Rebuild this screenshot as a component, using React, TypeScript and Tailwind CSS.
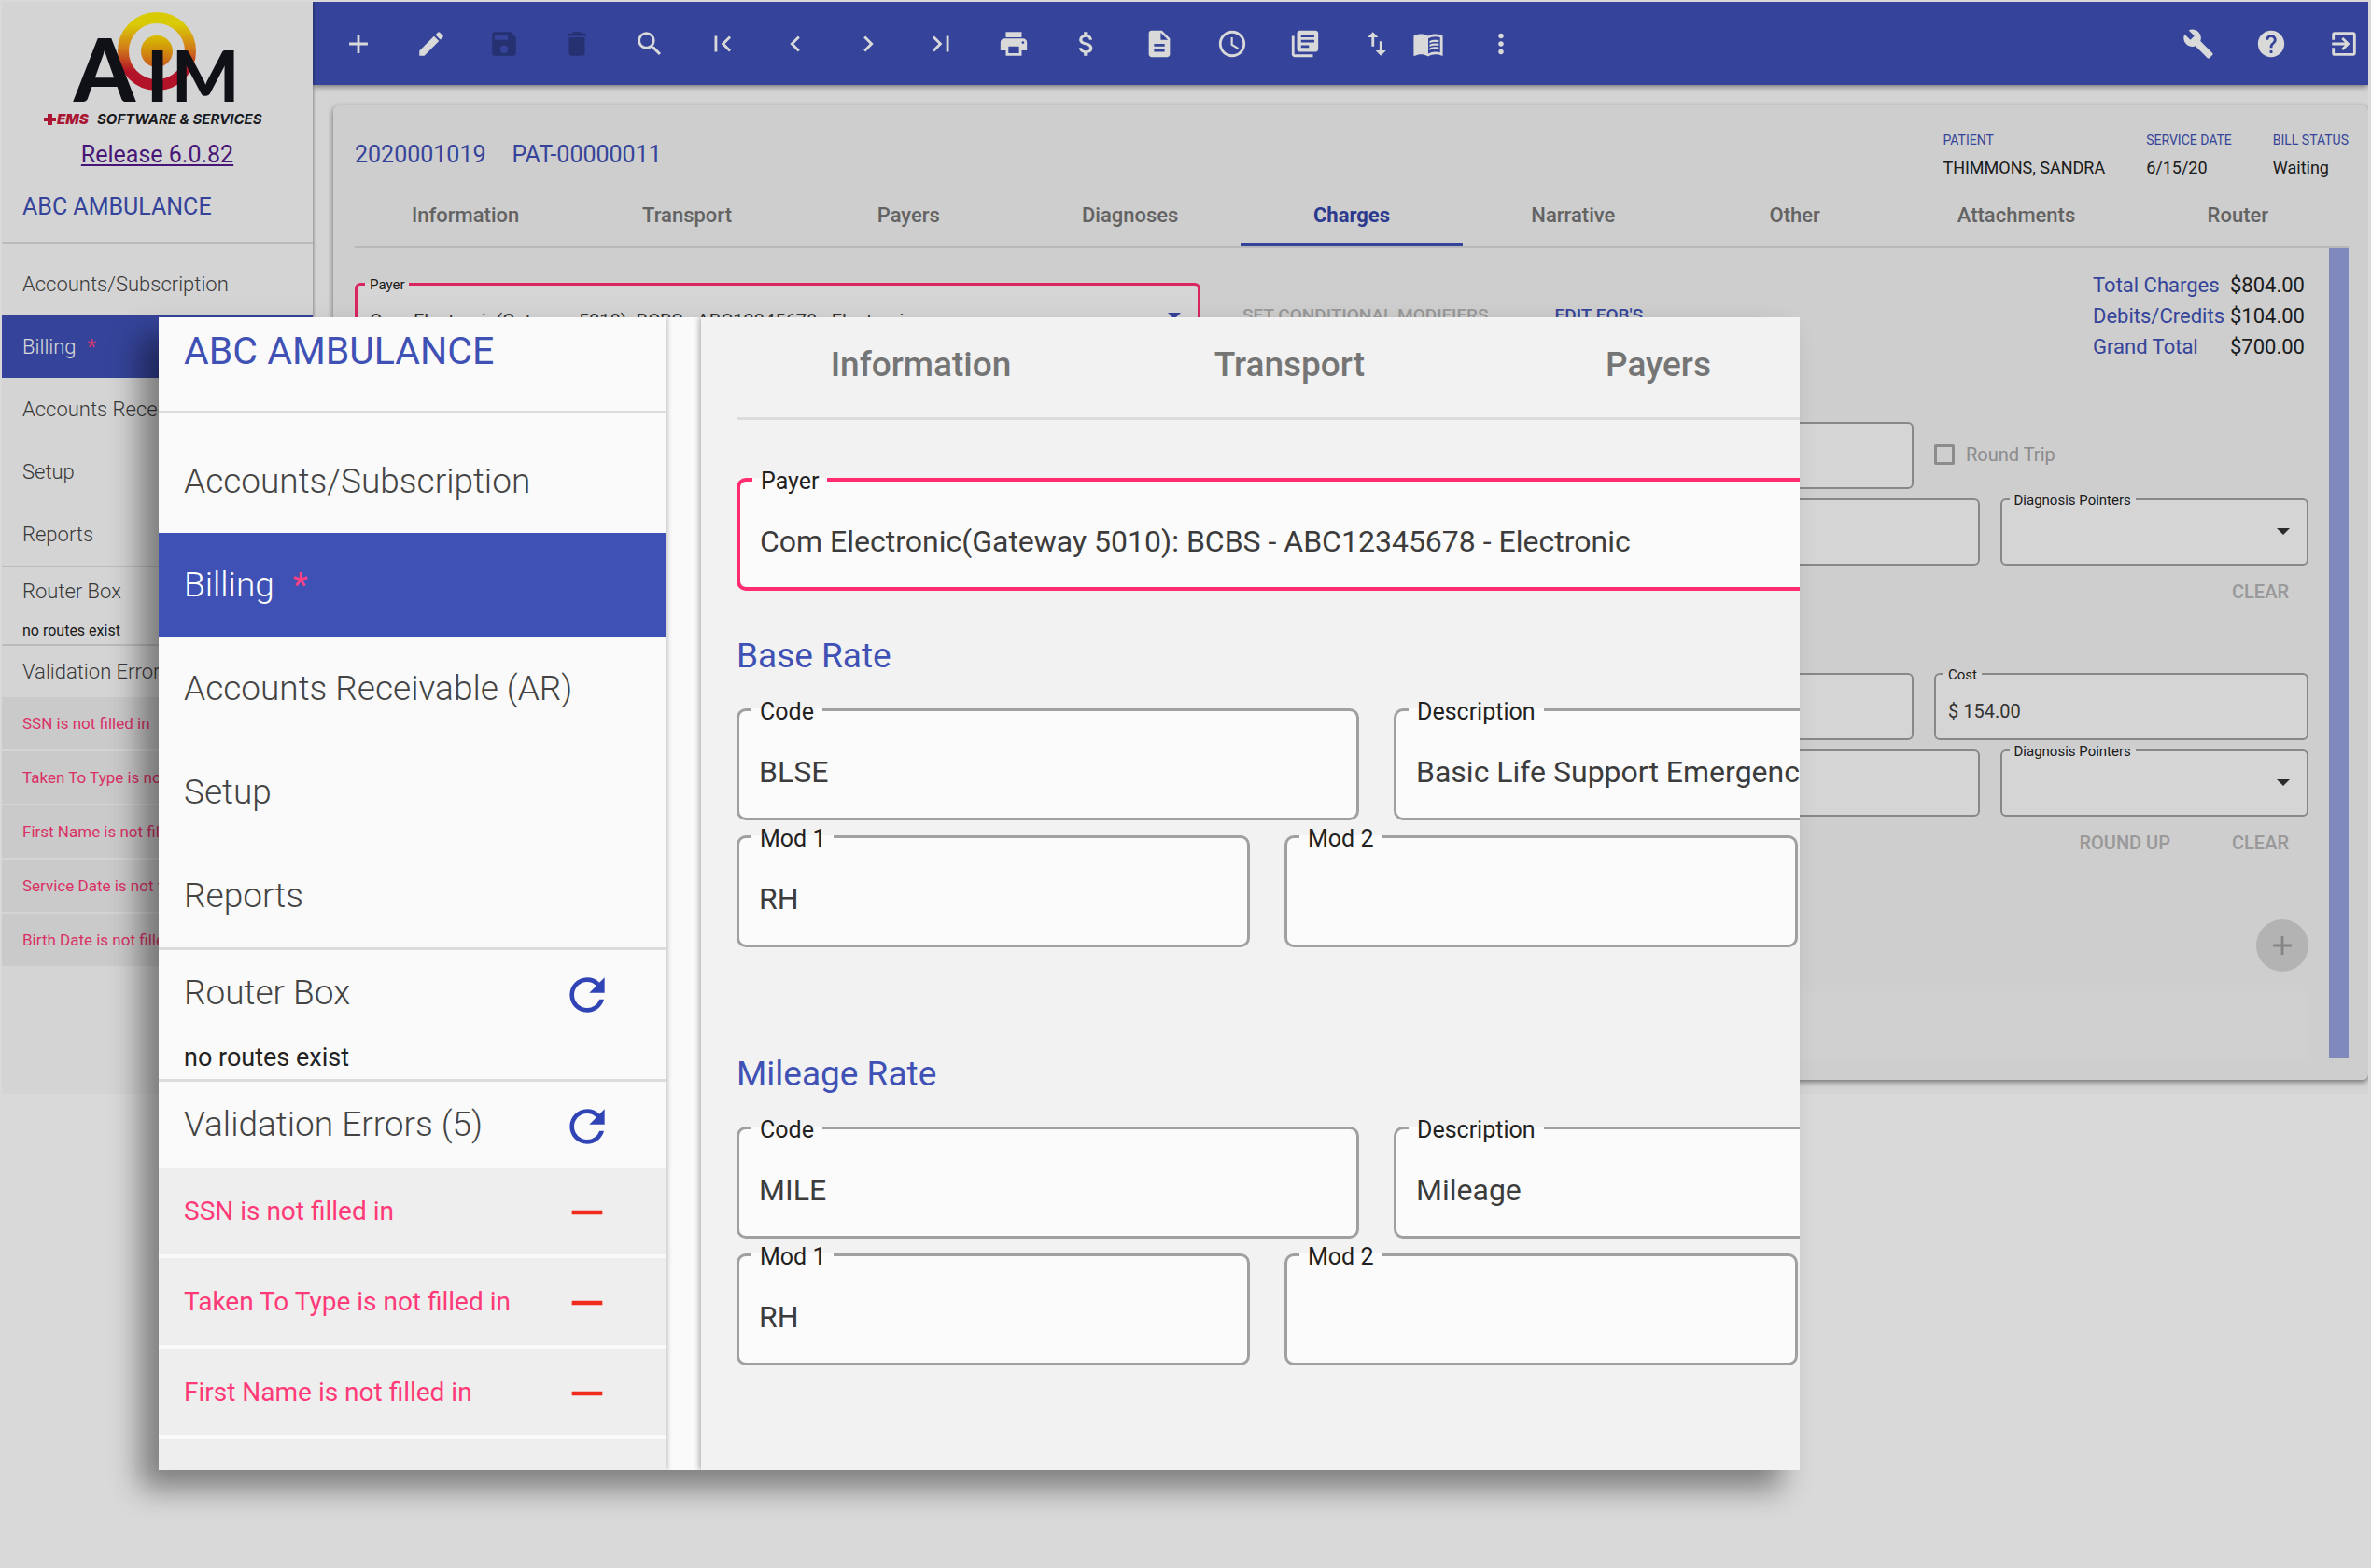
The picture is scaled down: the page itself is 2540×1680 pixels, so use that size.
import { useId, useState } from "react";
import clsx from "clsx";
import type { IconType } from "react-icons";
import {
  MdAccessTime,
  MdAdd,
  MdAttachMoney,
  MdBuild,
  MdChevronLeft,
  MdChevronRight,
  MdDelete,
  MdDescription,
  MdEdit,
  MdExitToApp,
  MdFirstPage,
  MdHelp,
  MdLastPage,
  MdLibraryBooks,
  MdMenuBook,
  MdMoreVert,
  MdPrint,
  MdRefresh,
  MdRemove,
  MdSave,
  MdSearch,
  MdSwapVert,
} from "react-icons/md";

type Tool = { label: string; icon: IconType; disabled?: boolean };

const tools: Tool[] = [
  { label: "Add", icon: MdAdd },
  { label: "Edit", icon: MdEdit },
  { label: "Save", icon: MdSave, disabled: true },
  { label: "Delete", icon: MdDelete, disabled: true },
  { label: "Search", icon: MdSearch },
  { label: "First", icon: MdFirstPage },
  { label: "Previous", icon: MdChevronLeft },
  { label: "Next", icon: MdChevronRight },
  { label: "Last", icon: MdLastPage },
  { label: "Print", icon: MdPrint },
  { label: "Payments", icon: MdAttachMoney },
  { label: "Document", icon: MdDescription },
  { label: "History", icon: MdAccessTime },
  { label: "Library", icon: MdLibraryBooks },
];

const rightTools: Tool[] = [
  { label: "Tools", icon: MdBuild },
  { label: "Help", icon: MdHelp },
  { label: "Log out", icon: MdExitToApp },
];

const navItems = ["Accounts/Subscription", "Billing", "Accounts Receivable (AR)", "Setup", "Reports"];

const tabs = ["Information", "Transport", "Payers", "Diagnoses", "Charges", "Narrative", "Other", "Attachments", "Router"];

const errors = [
  "SSN is not filled in",
  "Taken To Type is not filled in",
  "First Name is not filled in",
  "Service Date is not filled in",
  "Birth Date is not filled in",
];

const totals = [
  ["Total Charges", "$804.00"],
  ["Debits/Credits", "$104.00"],
  ["Grand Total", "$700.00"],
];

const payer = "Com Electronic(Gateway 5010): BCBS - ABC12345678 - Electronic";

function Logo() {
  return (
    <svg viewBox="0 0 331 140" className="h-[140px] w-[331px]" role="img" aria-label="AIM EMS Software & Services">
      <defs>
        <linearGradient id="ring" x1="0" y1="0" x2="0" y2="1">
          <stop offset="0.1" stopColor="#ffee08" />
          <stop offset="0.45" stopColor="#f7941d" />
          <stop offset="0.8" stopColor="#d3172f" />
        </linearGradient>
        <linearGradient id="bull" x1="0" y1="0" x2="0" y2="1">
          <stop offset="0" stopColor="#ffe100" />
          <stop offset="1" stopColor="#ee6a24" />
        </linearGradient>
      </defs>
      <circle cx="165" cy="53" r="36" fill="none" stroke="url(#ring)" strokeWidth="12" />
      <circle cx="165" cy="53" r="17" fill="url(#bull)" />
      <g fill="#13131c" className="font-[Lato] font-black">
        <text x="76" y="107" fontSize="94">A</text>
        <text x="154" y="107" fontSize="77">I</text>
        <text x="181" y="107" fontSize="76">M</text>
      </g>
      <path d="M48 120h5v4h4v4h-4v4h-5v-4h-4v-4h4z" fill="#c8193c" />
      <text x="58" y="131" fontSize="15" fill="#c8193c" className="font-[Inter] font-black italic">EMS</text>
      <text x="101" y="131" fontSize="15" fill="#1e1e26" className="font-[Inter] font-bold italic">{"SOFTWARE & SERVICES"}</text>
    </svg>
  );
}

function ToolButton({ tool, className }: { tool: Tool; className: string }) {
  const Icon = tool.icon;
  return (
    <button
      type="button"
      aria-label={tool.label}
      disabled={tool.disabled}
      className={clsx("flex h-full shrink-0 items-center justify-center text-white disabled:text-[#2d3a85]", className)}
    >
      <Icon size={34} />
    </button>
  );
}

function Toolbar() {
  return (
    <header className="relative flex h-[89px] items-center bg-[#3f51b5] pl-[10px] shadow-[0_2px_6px_rgba(0,0,0,0.45)]">
      {tools.map((t) => (
        <ToolButton key={t.label} tool={t} className="w-[78px]" />
      ))}
      <ToolButton tool={{ label: "Transfer", icon: MdSwapVert }} className="w-[76px]" />
      <ToolButton tool={{ label: "Manual", icon: MdMenuBook }} className="w-[34px]" />
      <ToolButton tool={{ label: "More", icon: MdMoreVert }} className="ml-[22px] w-[78px]" />
      <div className="-mr-[13px] ml-auto flex h-full">
        {rightTools.map((t) => (
          <ToolButton key={t.label} tool={t} className="w-[78px]" />
        ))}
      </div>
    </header>
  );
}

function Sidebar({ big }: { big?: boolean }) {
  const pad = big ? "px-[27px]" : "px-[22px]";
  const title = big ? "h-[92px] text-[37px]" : "text-[22px]";

  return (
    <aside
      className={clsx(
        "z-10 shrink-0 bg-[#fafafa] font-light text-[#444]",
        big ? "w-[543px] shadow-[2px_0_5px_rgba(0,0,0,0.25)]" : "w-[333px] shadow-[1px_0_3px_rgba(0,0,0,0.35)]"
      )}
    >
      {!big && (
        <div className="flex flex-col items-center">
          <Logo />
          <a href="#release" className="h-[46px] text-[25px] leading-[48px] font-normal text-[#551a8b] underline">
            Release 6.0.82
          </a>
        </div>
      )}
      <div
        className={clsx(
          "border-[#dcdcdc] font-normal text-[#3f51b5]",
          pad,
          big ? "h-[103px] border-b-[3px] text-[41px] leading-[72px]" : "h-[73px] border-b-2 text-[25px] leading-[68px]"
        )}
      >
        ABC AMBULANCE
      </div>

      <nav className={clsx("border-[#dcdcdc]", big ? "border-b-[3px] pt-[17px]" : "border-b-2 pt-[10px]")}>
        {navItems.map((item) => (
          <a
            key={item}
            href="#nav"
            className={clsx(
              "flex items-center",
              pad,
              big ? "h-[111px] text-[37px]" : "h-[67px] text-[22px]",
              item === "Billing" && "bg-[#3f51b5] text-white"
            )}
          >
            {item}
            {item === "Billing" && <span className={clsx("font-normal text-[#ff4081]", big ? "ml-5" : "ml-3")}>*</span>}
          </a>
        ))}
      </nav>

      <div className={clsx("border-[#dcdcdc]", big ? "h-[141px] border-b-[3px]" : "h-[84px] border-b-2")}>
        <div className={clsx("flex items-center justify-between", pad, big ? title : "h-[51px] text-[22px]")}>
          Router Box
          <RefreshButton big={big} label="Refresh router box" />
        </div>
        <p className={clsx("font-normal text-[#222]", pad, big ? "text-[27px] leading-[46px]" : "text-[16px] leading-[34px]")}>
          no routes exist
        </p>
      </div>

      <div className={clsx("flex items-center justify-between", pad, big ? title : "h-[55px] text-[22px]")}>
        Validation Errors (5)
        <RefreshButton big={big} label="Refresh validation errors" />
      </div>
      <ul className={clsx("grid font-normal text-[#ff3a78]", big ? "gap-1 text-[28px]" : "gap-[2px] text-[17px]")}>
        {errors.map((e) => (
          <li key={e} className={clsx("flex items-center justify-between bg-[#eeeeee]", pad, big ? "h-[93px]" : "h-[56px] pt-[2px]")}>
            {e}
            <button type="button" aria-label={`Dismiss: ${e}`} className={clsx("text-[#f02a1d]", big ? "mt-[3px] mr-[29px]" : "mr-[10px]")}>
              <MdRemove size={big ? 56 : 34} />
            </button>
          </li>
        ))}
      </ul>
    </aside>
  );
}

function RefreshButton({ big, label }: { big?: boolean; label: string }) {
  return (
    <button type="button" aria-label={label} className={clsx("text-[#3044b5]", big ? "mt-[3px] mr-[29px]" : "mr-[10px]")}>
      <MdRefresh size={big ? 56 : 34} />
    </button>
  );
}

type FieldProps = {
  label?: string;
  value?: string;
  big?: boolean;
  select?: boolean;
  error?: boolean;
  className?: string;
};

// Outlined text field: the legend cuts the notch in the top border
function Field({ label, value = "", big, select, error, className }: FieldProps) {
  const id = useId();
  const control = clsx(
    "block w-full appearance-none bg-transparent text-[#3c3c3c] outline-none",
    big ? "h-[99px] px-[8px] text-[32px]" : "h-[59px] px-[5px] text-[20px]"
  );

  return (
    <fieldset
      className={clsx(
        "relative min-w-0 bg-[#fbfbfb]",
        big ? "rounded-[10px] px-[13px]" : "rounded-[6px] px-[8px]",
        error ? "border-[#ff2d6f]" : "border-[#a0a0a0]",
        big ? (error ? "border-[4px]" : "border-[3px]") : error ? "border-[3px]" : "border-2",
        className
      )}
    >
      <legend className={clsx("text-[#222]", big ? "h-[33px] px-[9px] text-[25px] leading-[37px]" : "h-[20px] px-[5px] text-[15px] leading-[22px]")}>
        <label htmlFor={id}>{label}</label>
      </legend>
      {select ? (
        <>
          <select id={id} defaultValue={value} className={control}>
            <option value={value}>{value}</option>
          </select>
          <svg
            viewBox="0 0 14 7"
            className={clsx("pointer-events-none absolute right-[18px] bottom-[31px] h-[7px] w-[14px]", error ? "text-[#3f51b5]" : "text-[#333]")}
          >
            <path d="M0 0h14L7 7z" fill="currentColor" />
          </svg>
        </>
      ) : (
        <input id={id} type="text" defaultValue={value} className={control} />
      )}
    </fieldset>
  );
}

function Tabs() {
  const [active, setActive] = useState("Charges");
  return (
    <div role="tablist" className="grid grid-cols-9 border-b-2 border-[#d9d9d9]">
      {tabs.map((t) => (
        <button
          key={t}
          type="button"
          role="tab"
          aria-selected={t === active}
          onClick={() => setActive(t)}
          className={clsx(
            "h-[69px] border-b-4 pt-[6px] text-[22px]",
            t === active ? "border-[#3f51b5] font-bold text-[#3345a8]" : "border-transparent font-medium text-[#757575]"
          )}
        >
          {t}
        </button>
      ))}
    </div>
  );
}

type RateProps = { title: string; code: string; description: string; cost?: string; roundUp?: boolean };

function RateSection({ title, code, description, cost, roundUp }: RateProps) {
  return (
    <section className="mt-6">
      <h2 className="h-9 text-[22px] text-[#3f51b5]">{title}</h2>
      <div className="grid grid-cols-5 gap-x-[22px]">
        <Field label="Code" value={code} />
        <Field label="Description" value={description} className="col-span-2" />
        <Field label="Units" />
        {cost ? (
          <Field label="Cost" value={cost} />
        ) : (
          <label className="flex items-center gap-3 pt-[6px] text-[20px] text-[#a5a5a5]">
            <input type="checkbox" disabled className="size-[22px] appearance-none rounded-[2px] border-[3px] border-[#a5a5a5]" />
            Round Trip
          </label>
        )}
      </div>
      <div className="mt-px grid grid-cols-6 gap-x-[22px]">
        <Field label="Mod 1" value="RH" />
        <Field label="Mod 2" />
        <Field label="Mod 3" />
        <Field label="Mod 4" />
        <Field label="Modifier" />
        <Field label="Diagnosis Pointers" select />
      </div>
      <div className="mt-[10px] flex h-9 justify-end gap-[66px] pr-[21px] text-[20px] font-medium text-[#b4b4b4]">
        {roundUp && <button type="button" disabled>ROUND UP</button>}
        <button type="button" disabled>CLEAR</button>
      </div>
    </section>
  );
}

function ChargesCard() {
  return (
    <main className="mt-[22px] ml-[22px] rounded-[6px] bg-[#f2f2f2] pr-[21px] pb-[23px] pl-[23px] shadow-[0_2px_6px_rgba(0,0,0,0.5)]">
      <div className="flex h-[82px] justify-between pt-[26px]">
        <h1 className="flex gap-7 text-[25px] leading-[54px] text-[#3f51b5]">
          <span>2020001019</span>
          <span>PAT-00000011</span>
        </h1>
        <dl className="flex gap-11 text-[18px] leading-[30px] text-[#222]">
          <div>
            <dt className="text-[14px] leading-[22px] text-[#3f51b5]">PATIENT</dt>
            <dd className="pt-1">THIMMONS, SANDRA</dd>
          </div>
          <div>
            <dt className="text-[14px] leading-[22px] text-[#3f51b5]">SERVICE DATE</dt>
            <dd className="pt-1">6/15/20</dd>
          </div>
          <div>
            <dt className="text-[14px] leading-[22px] text-[#3f51b5]">BILL STATUS</dt>
            <dd className="pt-1">Waiting</dd>
          </div>
        </dl>
      </div>
      <Tabs />

      <div className="flex gap-[22px]">
        <div className="min-w-0 flex-1">
          <div className="flex h-[117px] items-start pt-[23px]">
            <Field label="Payer" value={payer} select error className="mt-[5px] w-[906px]" />
            <button type="button" disabled className="mt-[35px] ml-[45px] text-[19px] font-medium text-[#b4b4b4]">
              SET CONDITIONAL MODIFIERS
            </button>
            <button type="button" className="mt-[35px] ml-[71px] text-[19px] font-medium text-[#3f51b5]">
              {"EDIT EOB'S"}
            </button>
            <table className="mr-1 ml-auto text-left text-[22px] leading-[33px] text-[#222]">
              <tbody>
                {totals.map(([name, amount]) => (
                  <tr key={name}>
                    <th className="pr-[6px] font-normal text-[#3f51b5]">{name}</th>
                    <td>{amount}</td>
                  </tr>
                ))}
              </tbody>
            </table>
          </div>
          <RateSection title="Base Rate" code="BLSE" description="Basic Life Support Emergency" />
          <RateSection title="Mileage Rate" code="MILE" description="Mileage" cost="$ 154.00" roundUp />
          <div className="mt-[64px] flex justify-end">
            <button type="button" disabled aria-label="Add charge" className="flex size-14 items-center justify-center rounded-full bg-[#d3d3d3] text-[#9d9d9d]">
              <MdAdd size={34} />
            </button>
          </div>
          <div className="mt-[21px] h-[72px] bg-[#f5f5f5]" />
        </div>
        <div className="w-[21px] bg-[#97a1dc]" />
      </div>
    </main>
  );
}

// Enlarged close-up of the sidebar and the left side of the charges form
function CloseUp() {
  return (
    <div className="absolute top-[340px] right-[612px] left-[170px] z-30 flex h-[1235px] overflow-hidden bg-[#fafafa] shadow-[-20px_20px_30px_rgba(0,0,0,0.42)]">
      <Sidebar big />
      <div className="ml-[38px] min-w-0 flex-1 bg-[#f2f2f2] pl-[38px] shadow-[-2px_0_6px_rgba(0,0,0,0.3)]">
        <div className="flex h-[110px] w-max border-b-[3px] border-[#dcdcdc]">
          {tabs.slice(0, 3).map((t) => (
            <button key={t} type="button" className="h-[102px] w-[395px] text-[37px] font-medium text-[#757575]">
              {t}
            </button>
          ))}
        </div>
        <Field big error label="Payer" value={payer} className="mt-[47px] w-[1500px]" />
        <BigRate title="Base Rate" code="BLSE" description="Basic Life Support Emergency" />
        <BigRate title="Mileage Rate" code="MILE" description="Mileage" />
      </div>
    </div>
  );
}

function BigRate({ title, code, description }: RateProps) {
  return (
    <section className="h-[448px] pt-[46px]">
      <h2 className="h-[65px] text-[37px] leading-[48px] text-[#3f51b5]">{title}</h2>
      <div className="flex gap-[37px]">
        <Field big label="Code" value={code} className="w-[667px] shrink-0" />
        <Field big label="Description" value={description} className="w-[1371px] shrink-0" />
      </div>
      <div className="mt-px flex gap-[37px]">
        <Field big label="Mod 1" value="RH" className="w-[550px] shrink-0" />
        <Field big label="Mod 2" className="w-[550px] shrink-0" />
      </div>
    </section>
  );
}

export default function App() {
  return (
    <div className="relative min-h-screen overflow-hidden bg-white p-[2px] pr-[3px] font-[Roboto,sans-serif]">
      <div className="flex overflow-hidden bg-[#fafafa]">
        <Sidebar />
        <div className="min-w-0 flex-1 pb-[15px]">
          <Toolbar />
          <ChargesCard />
        </div>
      </div>
      <div className="absolute inset-0 z-20 bg-black/15" />
      <CloseUp />
    </div>
  );
}
